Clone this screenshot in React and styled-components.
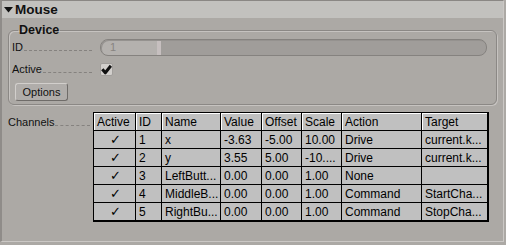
import React from 'react';
import styled, { createGlobalStyle } from 'styled-components';

const Global = createGlobalStyle`
  html, body {
    margin: 0;
    padding: 0;
    background: #aca9a5;
    font-family: "Liberation Sans", Arial, sans-serif;
  }
`;

const Panel = styled.div`
  box-sizing: border-box;
  width: 504px;
  height: 242px;
  border-top: 1px solid #8a8784;
  border-left: 2px solid #8f8c89;
  border-right: 1px solid #cbc8c5;
  border-bottom: 1px solid #cbc8c5;
  background: #aca9a5;
`;

const Header = styled.div`
  display: flex;
  align-items: center;
  gap: 2px;
  height: 17px;
  padding-left: 2px;
  background: #c2c1be;
  font-weight: bold;
  font-size: 13.5px;
  color: #111;
`;

const Body = styled.div`
  padding: 0 6px 0 6px;
`;

const Group = styled.fieldset`
  margin: 5px 0 0 0;
  padding: 2px 9px 3px 3px;
  border: 1px solid #8b8885;
  border-radius: 6px;
  box-shadow: inset 1px 1px 0 #c6c3c0, 1px 1px 0 #c6c3c0;
  width: 489px;
  box-sizing: border-box;
  display: flex;
  flex-direction: column;
`;

const Legend = styled.legend`
  padding: 0 1px;
  margin-left: 6px;
  font-weight: bold;
  font-size: 12.5px;
  line-height: 14px;
  color: #111;
`;

const Row = styled.div`
  display: flex;
  align-items: ${p => p.$top ? 'flex-start' : 'center'};
  height: ${p => p.$h || 17}px;
  margin-top: ${p => p.$mt || 0}px;
`;

const Label = styled.div`
  display: flex;
  align-items: baseline;
  width: ${p => p.$w}px;
  flex: none;
  font-size: 11px;
  line-height: ${p => p.$lh || 17}px;
  color: #111;
  margin-top: ${p => p.$mt || 0}px;
`;

const Leader = styled.span`
  flex: 1;
  border-bottom: 1px dashed #85827f;
  margin: 0 ${p => p.$gap ?? 8}px 0 1px;
`;

const Slider = styled.div`
  box-sizing: border-box;
  flex: 1;
  height: 17px;
  border: 1px solid #85827f;
  border-radius: 8px;
  background: linear-gradient(to right, #b4b1ae 0, #b4b1ae 56px, #c6bfbf 56px, #c6bfbf 60px, #a09d9a 60px);
  box-shadow: inset 1px 1px 0 #95928f;
  padding-left: 9px;
  font-size: 11px;
  line-height: 15px;
  color: #878481;
`;

const Check = styled.div`
  box-sizing: border-box;
  width: 13px;
  height: 13px;
  border: 1px solid #a19e9b;
  border-radius: 2px;
  background: #d2cfcc;
  display: flex;
  align-items: center;
  justify-content: center;
`;

const Button = styled.button`
  box-sizing: border-box;
  width: 53px;
  height: 18px;
  margin-left: 3px;
  padding: 0;
  border: 1px solid;
  border-color: #d2cfcc #6f6c69 #6f6c69 #d2cfcc;
  border-radius: 3px;
  background: #b0adaa;
  font-family: "Liberation Sans", Arial, sans-serif;
  font-size: 11px;
  color: #111;
`;

const Table = styled.table`
  border-collapse: separate;
  border-spacing: 0;
  table-layout: fixed;
  width: 396px;
  border: 1px solid #000;
  background: #c0c0c0;
  font-size: 12px;
  color: #000;
`;

const Th = styled.th`
  box-sizing: border-box;
  width: ${p => p.$w}px;
  height: 18px;
  padding: 0 2px 0 3px;
  border-right: 1px solid #000;
  border-bottom: 1px solid #000;
  box-shadow: inset 1px 1px 0 #fff;
  font-weight: normal;
  text-align: left;
  white-space: nowrap;
  overflow: hidden;
`;

const Td = styled.td`
  box-sizing: border-box;
  height: 18px;
  padding: 0 2px 0 3px;
  border-right: 1px solid #000;
  border-bottom: 1px solid #000;
  text-align: ${p => p.$center ? 'center' : 'left'};
  font-size: ${p => p.$center ? 13 : 12}px;
  white-space: nowrap;
  overflow: hidden;
`;

const columns = [
  ['Active', 42], ['ID', 26], ['Name', 59], ['Value', 41],
  ['Offset', 40], ['Scale', 40], ['Action', 80], ['Target', 66],
];

const rows = [
  ['1', 'x', '-3.63', '-5.00', '10.00', 'Drive', 'current.k...'],
  ['2', 'y', '3.55', '5.00', '-10....', 'Drive', 'current.k...'],
  ['3', 'LeftButt...', '0.00', '0.00', '1.00', 'None', ''],
  ['4', 'MiddleB...', '0.00', '0.00', '1.00', 'Command', 'StartCha...'],
  ['5', 'RightBu...', '0.00', '0.00', '1.00', 'Command', 'StopCha...'],
];

const App = () => {
  return (
    <>
      <Global />
      <Panel>
        <Header>
          <svg width="9" height="6" viewBox="0 0 9 6">
            <path d="M0 0 H9 L4.5 5.5 Z" fill="#111" />
          </svg>
          Mouse
        </Header>
        <Body>
          <Group>
            <Legend>Device</Legend>
            <Row>
              <Label $w={88}>ID<Leader /></Label>
              <Slider>1</Slider>
            </Row>
            <Row $mt={4} $h={18}>
              <Label $w={88} $lh={18}>Active<Leader /></Label>
              <Check>
                <svg width="11" height="11" viewBox="0 0 11 11">
                  <path d="M1.3 5.2 L4.3 8.8 L9.9 1.8" fill="none" stroke="#111" strokeWidth="3" strokeLinejoin="round" />
                </svg>
              </Check>
            </Row>
            <Row $mt={5} $h={18}>
              <Button>Options</Button>
            </Row>
          </Group>
          <Row $top $mt={7} $h={110}>
            <Label $w={85} $lh={18} $mt={1}>Channels<Leader $gap={3} /></Label>
            <Table>
              <thead>
                <tr>
                  {columns.map(([name, w]) => <Th key={name} $w={w}>{name}</Th>)}
                </tr>
              </thead>
              <tbody>
                {rows.map(r => (
                  <tr key={r[0]}>
                    <Td $center>✓</Td>
                    {r.map((c, i) => <Td key={i}>{c}</Td>)}
                  </tr>
                ))}
              </tbody>
            </Table>
          </Row>
        </Body>
      </Panel>
    </>
  );
};

export default App;
